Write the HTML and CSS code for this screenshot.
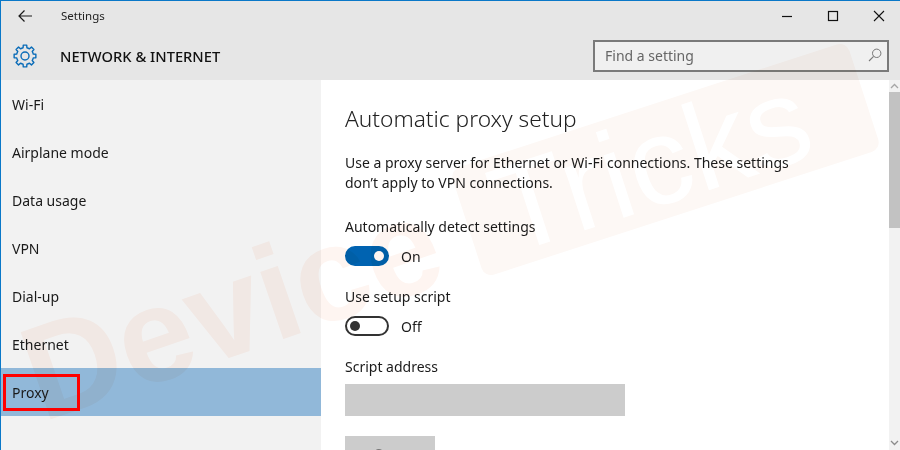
FILE: index.html
```html
<!DOCTYPE html>
<html lang="en">
<head>
<meta charset="utf-8">
<title>Settings</title>
<link rel="stylesheet" href="styles.css">
</head>
<body>
<div class="window">
  <header class="top">
    <div class="titlebar">
      <svg class="back" width="16" height="14" viewBox="0 0 16 14"><path d="M2 7H15M7.500 1.500 2 7l5.500 5.500" fill="none" stroke="#1a1a1a" stroke-width="1.200"/></svg>
      <span class="title">Settings</span>
      <div class="controls">
        <svg width="12" height="12" viewBox="0 0 12 12"><path d="M1 6.500H11" stroke="#111" stroke-width="1.200"/></svg>
        <svg width="12" height="12" viewBox="0 0 12 12"><rect x="1.500" y="1.500" width="9" height="9" fill="none" stroke="#111" stroke-width="1.200"/></svg>
        <svg width="12" height="12" viewBox="0 0 12 12"><path d="M1 1 11 11M11 1 1 11" stroke="#111" stroke-width="1.100"/></svg>
      </div>
    </div>
    <div class="headbar">
      <svg class="gear" width="24" height="24" viewBox="-12 -12 24 24"><path d="M-1.910-8.280-1.720-10.860H1.720L1.910-8.280A8.500 8.500 0 0 1 4.500-7.210L6.470-8.900 8.900-6.470 7.210-4.500A8.500 8.500 0 0 1 8.280-1.910L10.860-1.720V1.720L8.280 1.910A8.500 8.500 0 0 1 7.210 4.500L8.900 6.470 6.470 8.900 4.500 7.210A8.500 8.500 0 0 1 1.910 8.280L1.720 10.860H-1.720L-1.910 8.280A8.500 8.500 0 0 1-4.500 7.210L-6.470 8.900-8.900 6.470-7.210 4.500A8.500 8.500 0 0 1-8.280 1.910L-10.860 1.720V-1.720L-8.280-1.910A8.500 8.500 0 0 1-7.210-4.500L-8.900-6.470-6.470-8.900-4.500-7.210A8.500 8.500 0 0 1-1.910-8.280Z" fill="none" stroke="#0a6cb8" stroke-width="1.400" stroke-linejoin="round"/><circle r="4" fill="none" stroke="#0a6cb8" stroke-width="1.400"/></svg>
      <h1 class="section">NETWORK &amp; INTERNET</h1>
      <div class="search">
        <span class="placeholder">Find a setting</span>
        <svg width="14" height="14" viewBox="0 0 14 14"><circle cx="8.700" cy="5.300" r="4.200" fill="none" stroke="#777" stroke-width="1"/><path d="M5.600 8.400 1 13" stroke="#777" stroke-width="1.100"/></svg>
      </div>
    </div>
  </header>
  <div class="body">
    <nav class="nav">
      <a class="nav-item">Wi-Fi</a>
      <a class="nav-item">Airplane mode</a>
      <a class="nav-item">Data usage</a>
      <a class="nav-item">VPN</a>
      <a class="nav-item">Dial-up</a>
      <a class="nav-item">Ethernet</a>
      <a class="nav-item is-active">Proxy<span class="callout"></span></a>
    </nav>
    <main class="content">
      <h2 class="heading">Automatic proxy setup</h2>
      <p class="intro">Use a proxy server for Ethernet or Wi-Fi connections. These settings don’t apply to VPN connections.</p>
      <div class="field">
        <div class="label">Automatically detect settings</div>
        <div class="toggle-row"><span class="toggle is-on"><i class="knob"></i></span><span>On</span></div>
      </div>
      <div class="field">
        <div class="label">Use setup script</div>
        <div class="toggle-row"><span class="toggle"><i class="knob"></i></span><span>Off</span></div>
      </div>
      <div class="field">
        <div class="label">Script address</div>
        <div class="input"></div>
      </div>
      <div class="save">Save</div>
    </main>
    <div class="scrollbar">
      <svg class="arrow" width="11" height="12" viewBox="0 0 11 12"><path d="M2 8 5.500 4.500 9 8" fill="none" stroke="#a6a6a6" stroke-width="1.300"/></svg>
      <div class="thumb"></div>
      <svg class="arrow arrow-down" width="11" height="12" viewBox="0 0 11 12"><path d="M2 4 5.500 7.500 9 4" fill="none" stroke="#8c8c8c" stroke-width="1.300"/></svg>
    </div>
  </div>
  <div class="wm-device">Device</div>
  <div class="wm-box">Tricks</div>
</div>
</body>
</html>
```
FILE: styles.css
```css
* { box-sizing: border-box; }
html, body { margin: 0; height: 100%; overflow: hidden; }
body { font-family: "Noto Sans", "Open Sans", sans-serif; color: #1a1a1a; }
.window {
  position: relative;
  width: 900px;
  height: 450px;
  overflow: hidden;
  border-top: 1px solid #0a78c8;
  border-left: 1px solid #0a78c8;
  display: flex;
  flex-direction: column;
  background: #fff;
}
.top { height: 79px; background: #e6e6e6; flex: none; }
.titlebar { height: 29px; display: flex; align-items: center; padding-left: 16px; }
.back { flex: none; }
.title { font-size: 11.5px; margin-left: 28px; color: #222; }
.controls { margin-left: auto; display: flex; gap: 34px; padding-right: 15px; }
.headbar { height: 50px; display: flex; align-items: center; padding-left: 12px; }
.gear { flex: none; margin-top: 2px; }
.section { margin: 2px 0 0 23px; font-size: 14.7px; font-weight: 500; color: #111; line-height: 1; }
.search {
  margin-left: auto;
  margin-right: 11px;
  margin-top: 2px;
  width: 296px;
  height: 32px;
  border: 2px solid #7a7a7a;
  background: #f0f0f0;
  display: flex;
  align-items: center;
  justify-content: space-between;
  padding: 0 5px 2px 10px;
}
.placeholder { font-size: 14px; color: #666; }
.body { flex: 1; display: flex; min-height: 0; }
.nav { width: 320px; flex: none; background: #f2f2f2; }
.nav-item {
  position: relative;
  display: flex;
  align-items: center;
  height: 48px;
  padding-left: 11px;
  font-size: 14px;
}
.is-active { background: #91b8d9; }
.callout {
  position: absolute;
  left: 2px;
  top: 6px;
  width: 77px;
  height: 37px;
  border: 3px solid #f00;
}
.content { flex: 1; padding: 0 24px; font-size: 14px; overflow: hidden; }
.heading { margin: 21px 0 0; font-size: 22.7px; font-weight: 300; line-height: 36px; color: #222; }
.intro { margin: 16px 0 0; line-height: 20px; width: 470px; }
.field { margin-top: 21px; }
.field:first-of-type { margin-top: 24px; }
.label { line-height: 20px; }
.toggle-row { margin-top: 9px; display: flex; align-items: center; gap: 12px; height: 20px; }
.toggle {
  width: 44px;
  height: 20px;
  border-radius: 10px;
  border: 2px solid #333;
  display: flex;
  align-items: center;
  padding: 0 3px;
}
.toggle.is-on { background: #0063b1; border-color: #0063b1; justify-content: flex-end; }
.knob { width: 10px; height: 10px; border-radius: 50%; background: #333; }
.is-on .knob { background: #fff; }
.input { width: 280px; height: 32px; margin-top: 7px; background: #ccc; }
.save {
  width: 90px;
  height: 32px;
  margin-top: 20px;
  background: #ccc;
  color: #777;
  text-align: center;
  line-height: 36px;
}
.scrollbar { width: 11px; flex: none; background: #f2f2f2; display: flex; flex-direction: column; }
.arrow { flex: none; }
.thumb { height: 136px; background: #c2c2c2; flex: none; }
.arrow-down { margin-top: auto; margin-bottom: 1px; }
.wm-device {
  position: absolute;
  left: 48px;
  top: 307px;
  font: 700 134px/1 "Liberation Sans", sans-serif;
  color: #fef5f1;
  mix-blend-mode: multiply;
  transform: rotate(-19deg);
  transform-origin: left bottom;
  pointer-events: none;
  white-space: nowrap;
}
.wm-box {
  position: absolute;
  left: 456px;
  top: 102px;
  width: 417px;
  height: 113px;
  border-radius: 10px;
  background: #fdf8f5;
  color: #fff;
  font: 400 124px/113px "Liberation Sans", sans-serif;
  padding-left: 30px;
  mix-blend-mode: multiply;
  transform: rotate(-18deg);
  pointer-events: none;
  white-space: nowrap;
}
```
